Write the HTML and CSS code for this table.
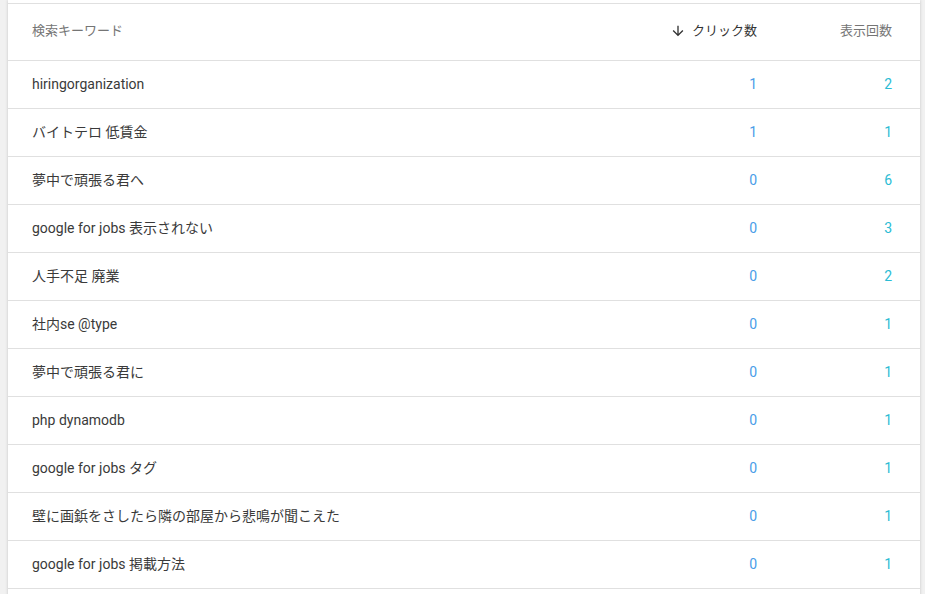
FILE: index.html
```html
<!DOCTYPE html>
<html lang="ja">
<head>
<meta charset="utf-8">
<link rel="stylesheet" href="styles.css">
</head>
<body>
<div class="card">
  <div class="top-gap"></div>
  <div class="row head">
    <div class="cell kw">検索キーワード</div>
    <div class="cell num sorted">
      <svg class="arrow" width="16" height="16" viewBox="0 0 24 24"><path d="M20 12l-1.41-1.41L13 16.17V4h-2v12.17l-5.58-5.59L4 12l8 8 8-8z" fill="#333"/></svg>
      <span>クリック数</span>
    </div>
    <div class="cell num">表示回数</div>
  </div>
  <div class="row"><div class="cell kw">hiringorganization</div><div class="cell num clicks">1</div><div class="cell num imps">2</div></div>
  <div class="row"><div class="cell kw">バイトテロ 低賃金</div><div class="cell num clicks">1</div><div class="cell num imps">1</div></div>
  <div class="row"><div class="cell kw">夢中で頑張る君へ</div><div class="cell num clicks">0</div><div class="cell num imps">6</div></div>
  <div class="row"><div class="cell kw">google for jobs 表示されない</div><div class="cell num clicks">0</div><div class="cell num imps">3</div></div>
  <div class="row"><div class="cell kw">人手不足 廃業</div><div class="cell num clicks">0</div><div class="cell num imps">2</div></div>
  <div class="row"><div class="cell kw">社内se @type</div><div class="cell num clicks">0</div><div class="cell num imps">1</div></div>
  <div class="row"><div class="cell kw">夢中で頑張る君に</div><div class="cell num clicks">0</div><div class="cell num imps">1</div></div>
  <div class="row"><div class="cell kw">php dynamodb</div><div class="cell num clicks">0</div><div class="cell num imps">1</div></div>
  <div class="row"><div class="cell kw">google for jobs タグ</div><div class="cell num clicks">0</div><div class="cell num imps">1</div></div>
  <div class="row"><div class="cell kw">壁に画鋲をさしたら隣の部屋から悲鳴が聞こえた</div><div class="cell num clicks">0</div><div class="cell num imps">1</div></div>
  <div class="row"><div class="cell kw">google for jobs 掲載方法</div><div class="cell num clicks">0</div><div class="cell num imps">1</div></div>
  <div class="row"><div class="cell kw">&nbsp;</div><div class="cell num"></div><div class="cell num"></div></div>
</div>
</body>
</html>
```

FILE: styles.css
```css
html, body {
  margin: 0;
  padding: 0;
  height: 100%;
  overflow: hidden;
}
body {
  background: #f1f1f1;
  padding: 0 5px 0 8px;
  font-family: Roboto, "Noto Sans CJK JP", sans-serif;
  font-size: 14px;
  color: #3a3a3a;
}
.card {
  background: #fff;
  width: 912px;
  box-shadow: 0 0 3px rgba(0,0,0,0.18);
}
.top-gap {
  height: 3px;
}
.row {
  display: grid;
  grid-template-columns: 1fr 138px 135px;
  align-items: center;
  border-top: 1px solid #e0e0e0;
  padding: 0 28px 2px 24px;
  box-sizing: border-box;
  height: 48px;
}
.row.head {
  height: 57px;
  color: #757575;
  font-size: 13px;
}
.cell {
  white-space: nowrap;
  line-height: 16px;
}
.num {
  text-align: right;
}
.sorted {
  color: #333;
  display: flex;
  justify-content: flex-end;
  align-items: center;
  gap: 6px;
}
.arrow {
  display: block;
}
.clicks {
  color: #4a9de8;
}
.imps {
  color: #2bbcd4;
}
```
